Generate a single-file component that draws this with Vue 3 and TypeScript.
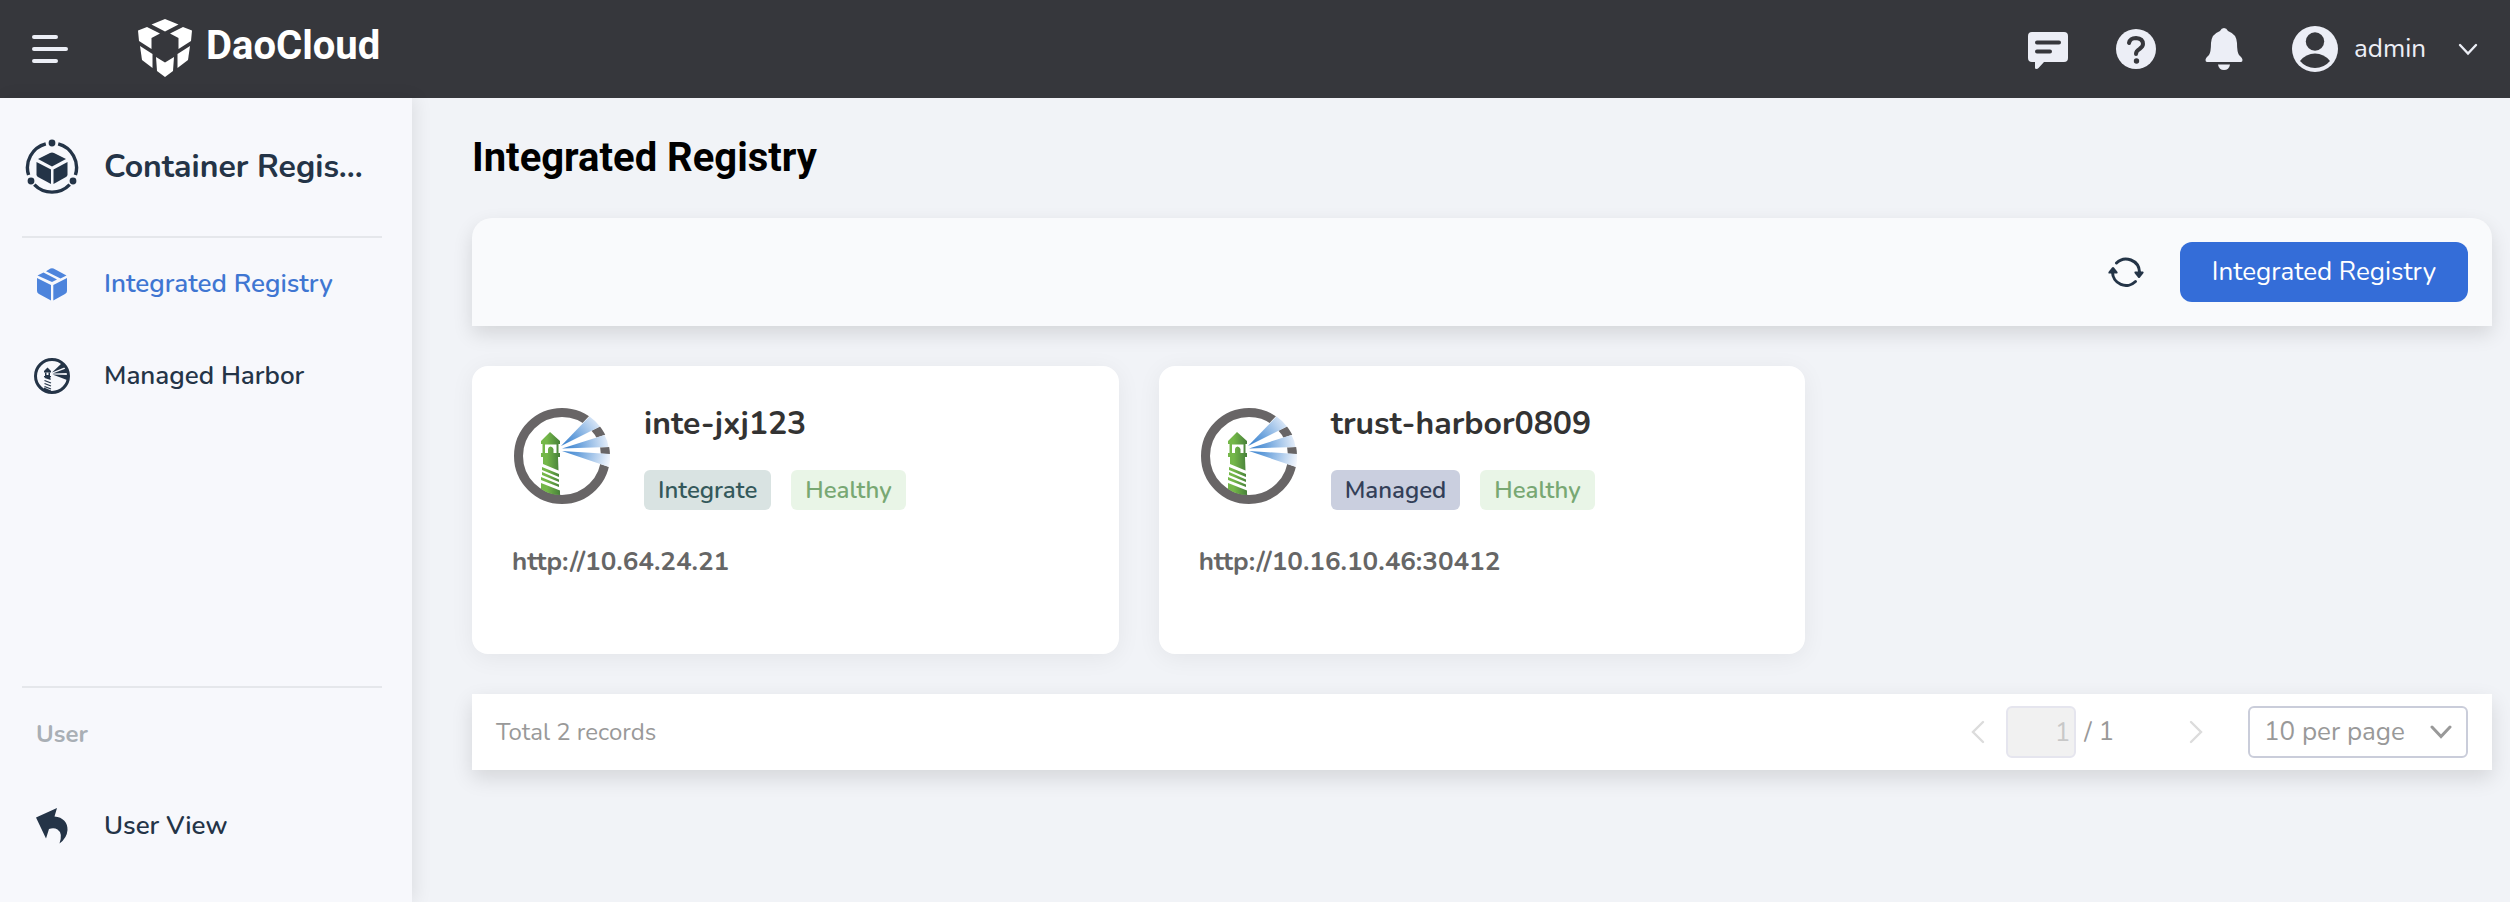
<script setup lang="ts">
import { ref } from 'vue'

interface Registry {
  name: string
  kind: 'Integrate' | 'Managed'
  status: string
  url: string
}

const registries: Registry[] = [
  { name: 'inte-jxj123', kind: 'Integrate', status: 'Healthy', url: 'http://10.64.24.21' },
  { name: 'trust-harbor0809', kind: 'Managed', status: 'Healthy', url: 'http://10.16.10.46:30412' },
]

const page = ref('1')
const pageSize = ref('10')
</script>

<template>
  <div class="app">
    <header class="topbar">
      <button class="icon-button menu" aria-label="Toggle menu">
        <svg width="36" height="28" viewBox="0 0 36 28">
          <path d="M2 2H24M2 14H34M2 26H24" stroke="#eceef6" stroke-width="4" stroke-linecap="round" />
        </svg>
      </button>
      <a class="brand" href="#">
        <svg width="54" height="58" viewBox="0 0 54 58" fill="#fff">
          <path d="M13.500 5.500 27 0 40.500 5.500 27 12.500z" />
          <path d="M0 11.500 9 8 22 14.500 13.500 19V30L1 22z" />
          <path d="M54 11.500 45 8 32 14.500 40.500 19V30L53 22z" />
          <path d="M2 27 14.500 35V49L4 41z" />
          <path d="M52 27 39.500 35V49L50 41z" />
          <path d="M18 38 27 43.500 36 38 35 52 27 58 19 52z" />
        </svg>
        <span class="brand-name">DaoCloud</span>
      </a>
      <div class="top-actions">
        <button class="icon-button" aria-label="Messages">
          <svg width="40" height="40" viewBox="0 0 40 40">
            <path d="M4 3H36a4 4 0 0 1 4 4V29a4 4 0 0 1-4 4H16L10.500 39Q9 40.500 7 39.500V33H4a4 4 0 0 1-4-4V7a4 4 0 0 1 4-4z" fill="#eceef6" />
            <path d="M9 13.500H31M9 22.500H22" stroke="#36373c" stroke-width="4" stroke-linecap="round" />
          </svg>
        </button>
        <button class="icon-button" aria-label="Help">
          <svg width="40" height="40" viewBox="0 0 40 40">
            <circle cx="20" cy="20" r="20" fill="#eceef6" />
            <path d="M13 14Q14 9 20 9Q27 9.500 27 15Q27 17.500 23.500 20Q20 22 20 25" fill="none" stroke="#36373c" stroke-width="4" stroke-linecap="round" />
            <circle cx="20.500" cy="32" r="2.700" fill="#36373c" />
          </svg>
        </button>
        <button class="icon-button" aria-label="Notifications">
          <svg width="40" height="44" viewBox="0 0 40 44" fill="#eceef6">
            <path d="M20 1Q22.500 1 24 4Q32.500 7 33 16Q33 25 35 28Q38.500 31 38.500 33Q38.500 35 37 35H3Q1.500 35 1.500 33Q1.500 31 5 28Q7 25 7 16Q7.500 7 16 4Q17.500 1 20 1z" />
            <path d="M14 37.500H26Q25 43 20 43Q15 43 14 37.500z" />
          </svg>
        </button>
        <button class="user-menu">
          <svg width="46" height="46" viewBox="0 0 46 46">
            <circle cx="23" cy="23" r="23" fill="#eceef6" />
            <circle cx="23" cy="15.500" r="9.200" fill="#36373c" />
            <path d="M8 35Q14 27.500 23 27.500Q32 27.500 38 35Q32 42 23 42Q14 42 8 35z" fill="#36373c" />
          </svg>
          <span class="user-name">admin</span>
          <svg width="20" height="14" viewBox="0 0 20 14">
            <path d="M2 3 10 11.500 18 3" fill="none" stroke="#eceef6" stroke-width="2.400" stroke-linecap="round" />
          </svg>
        </button>
      </div>
    </header>

    <div class="body">
      <aside class="sidebar">
        <div class="product">
          <span class="nav-icon">
            <svg width="56" height="56" viewBox="0 0 56 56" fill="#243447">
              <g fill="none" stroke="#243447" stroke-width="3.400">
                <path d="M34.200 4.800A24.600 24.600 0 0 1 51.400 36" />
                <path d="M45.700 45.600A24.600 24.600 0 0 1 10.300 45.600" />
                <path d="M4.600 36A24.600 24.600 0 0 1 21.800 4.800" />
              </g>
              <circle cx="28" cy="4" r="3.400" />
              <circle cx="7" cy="42" r="3.400" />
              <circle cx="49" cy="42" r="3.400" />
              <path d="M14 20 26 14Q28 13 30 14L42 20 28 27.500z" />
              <path d="M12.500 23 27 30.500V45L14 38Q12.500 37 12.500 35.500z" />
              <path d="M43.500 23 29.500 30.500V45L42 38Q43.500 37 43.500 35.500z" />
            </svg>
          </span>
          <span class="product-name">Container Regis...</span>
        </div>
        <nav class="nav">
          <a class="nav-item active" href="#">
            <span class="nav-icon">
              <svg width="32" height="34" viewBox="0 0 32 34" fill="#4d84dc">
                <path d="M1.500 8.500 7.500 5.500 21 12.500 16 15z" />
                <path d="M10 4.200 14.500 1.500Q16 .800 17.500 1.500L30.500 8.500 24.500 11.500z" />
                <path d="M1 11 15 18V33.500L3 27Q1 26 1 24z" />
                <path d="M31 11 17.300 18V33.500L29 27Q31 26 31 24z" />
              </svg>
            </span>
            <span>Integrated Registry</span>
          </a>
          <a class="nav-item" href="#">
            <span class="nav-icon">
              <svg width="36" height="36" viewBox="0 0 36 36" fill="#243447">
                <circle cx="18" cy="18" r="16.500" fill="none" stroke="#243447" stroke-width="3" />
                <path d="M18 14.500 28 5 31.500 9z" />
                <path d="M18.500 15.500 32 10.500 33.500 15z" />
                <path d="M18.500 16.500 34 17 33 22z" />
                <path d="M10 13 13.500 9.500 17 13V14.500H10z" />
                <path d="M11 14.500H12.500V17H14.500V14.500H16V18H17V19H16.300L16.700 22 10.500 20 10.700 19H10V18H11z" />
                <path d="M10.500 22.500 17 25M10.500 25.500 17 28M10.500 28.500 17 31" stroke="#243447" stroke-width="1.300" />
                <path d="M10 29.500 17 32.500V34L10 32z" />
              </svg>
            </span>
            <span>Managed Harbor</span>
          </a>
        </nav>
        <div class="side-bottom">
          <div class="group-label">User</div>
          <a class="nav-item" href="#">
            <span class="nav-icon">
              <svg width="32" height="36" viewBox="0 0 32 36" fill="#243447">
                <path d="M0 9.500 21 0 18.500 8.500C27 9 32 15 31.500 22Q31 30 23.500 35.500Q27 25 21.500 21.500Q18 19.500 13 21L10 30.500z" />
              </svg>
            </span>
            <span>User View</span>
          </a>
        </div>
      </aside>

      <main class="content">
        <h1 class="title">Integrated Registry</h1>
        <div class="toolbar">
          <button class="icon-button" aria-label="Refresh">
            <svg width="36" height="32" viewBox="0 0 36 32">
              <g fill="none" stroke="#243447" stroke-width="3" stroke-linecap="round">
                <path d="M8.500 7A13.500 13.500 0 0 1 31.500 16" />
                <path d="M27.500 25.500A13.500 13.500 0 0 1 4.500 16" />
              </g>
              <path d="M27 15.500H35Q36 16 35.500 17L32 21.500Q31 22.500 30 21.500L26.500 17Q26 15.500 27 15.500z" fill="#243447" />
              <path d="M1 17.500H9Q10 17 9.500 16L6 11.500Q5 10.500 4 11.500L.500 16Q0 17.500 1 17.500z" fill="#243447" />
            </svg>
          </button>
          <button class="primary">Integrated Registry</button>
        </div>

        <div class="cards">
          <article v-for="(item, i) in registries" :key="item.name" class="card">
            <div class="card-head">
              <svg class="harbor" width="96" height="96" viewBox="0 0 96 96">
                <defs>
                  <radialGradient :id="`beam${i}`" gradientUnits="userSpaceOnUse" cx="47" cy="40" r="51">
                    <stop offset="0" stop-color="#2f7bcb" />
                    <stop offset=".35" stop-color="#69a1dc" />
                    <stop offset="1" stop-color="#f4f7fd" />
                  </radialGradient>
                  <linearGradient :id="`tower${i}`" gradientUnits="userSpaceOnUse" x1="27" y1="0" x2="46" y2="0">
                    <stop offset=".3" stop-color="#74b749" />
                    <stop offset="1" stop-color="#47803a" />
                  </linearGradient>
                </defs>
                <circle cx="48" cy="48" r="43.500" fill="none" stroke="#686566" stroke-width="9" />
                <path d="M47 38 77 6 90 16.500z M47 41 92 26.500 98 39z M47 43 98 46.300 98 60z" fill="#fff" />
                <g :fill="`url(#beam${i})`">
                  <path d="M47 38 75.500 8.500Q82 13 86 18.500z" />
                  <path d="M48 40.500 90.500 27Q93.500 32 94.500 39z" />
                  <path d="M48 43 96 46Q96.500 52 95 59z" />
                </g>
                <g :fill="`url(#tower${i})`">
                  <path d="M36 24 46 33V36H44.500V45H46V49H44L44.500 62.500 29 56V49H27V45H28.500V36H27V33z" />
                  <path d="M28 59 45 66V69L28 62z" />
                  <path d="M28 64 45 71.500V74L28 67z" />
                  <path d="M27 69 45 76.500V79L27 72z" />
                  <path d="M27 75 46 82.500V87Q36 87 27 81z" />
                </g>
                <path d="M31 36.500H42.500V45H39.500V41Q38.500 38.500 36.500 38.500Q34.500 38.500 34 41V45H31z" fill="#fff" />
              </svg>
              <div class="card-info">
                <h2 class="card-name">{{ item.name }}</h2>
                <div class="tags">
                  <span class="tag" :class="item.kind.toLowerCase()">{{ item.kind }}</span>
                  <span class="tag healthy">{{ item.status }}</span>
                </div>
              </div>
            </div>
            <p class="url">{{ item.url }}</p>
          </article>
        </div>

        <footer class="pager">
          <span class="total">Total 2 records</span>
          <button class="icon-button" aria-label="Previous page" disabled>
            <svg width="16" height="24" viewBox="0 0 16 24">
              <path d="M13 2 3 12 13 22" fill="none" stroke="#dcdcdc" stroke-width="2.400" stroke-linecap="round" />
            </svg>
          </button>
          <input v-model="page" class="page-input" aria-label="Page number" disabled />
          <span class="page-count">/ 1</span>
          <button class="icon-button next" aria-label="Next page" disabled>
            <svg width="16" height="24" viewBox="0 0 16 24">
              <path d="M3 2 13 12 3 22" fill="none" stroke="#dcdcdc" stroke-width="2.400" stroke-linecap="round" />
            </svg>
          </button>
          <div class="size-picker">
            <select v-model="pageSize" aria-label="Records per page">
              <option value="10">10 per page</option>
              <option value="20">20 per page</option>
              <option value="50">50 per page</option>
            </select>
            <svg class="caret" width="22" height="14" viewBox="0 0 22 14">
              <path d="M2 2 11 11.500 20 2" fill="none" stroke="#999" stroke-width="3" stroke-linecap="round" />
            </svg>
          </div>
        </footer>
      </main>
    </div>
  </div>
</template>

<style>
body {
  margin: 0;
}
</style>

<style scoped>
.app {
  display: flex;
  flex-direction: column;
  min-height: 100vh;
  background: #f1f3f7;
  color: #243447;
  font-family: Nunito, "Open Sans", "Noto Sans", sans-serif;
  font-size: 26px;
  line-height: 36px;
}
.app *,
.app *::before {
  box-sizing: border-box;
}
button,
input,
select {
  font: inherit;
  color: inherit;
}
svg {
  display: block;
  flex: none;
}
a {
  color: inherit;
  text-decoration: none;
}
.icon-button {
  display: flex;
  padding: 0;
  border: 0;
  background: none;
}
.topbar {
  display: flex;
  align-items: center;
  height: 98px;
  padding: 0 32px;
  background: #36373c;
}
.brand {
  display: flex;
  align-items: flex-start;
  gap: 14px;
  margin-left: 70px;
  padding-bottom: 2px;
}
.brand-name {
  color: #fff;
  font: 700 40px/54px Roboto, sans-serif;
}
.top-actions {
  display: flex;
  align-items: center;
  gap: 48px;
  margin-left: auto;
}
.user-menu {
  display: flex;
  align-items: center;
  padding: 0;
  border: 0;
  background: none;
  color: #eceef6;
}
.user-name {
  margin: 0 32px 0 16px;
}
.body {
  display: flex;
  flex: 1;
}
.sidebar {
  display: flex;
  flex-direction: column;
  flex: none;
  width: 412px;
  padding: 0 30px 30px 22px;
  background: #f7f8fc;
  box-shadow: 4px 0 16px rgba(0, 0, 0, 0.08);
}
.product,
.nav-item {
  display: flex;
  align-items: center;
  gap: 22px;
}
.product {
  height: 140px;
  border-bottom: 2px solid #e5e7eb;
  font-size: 32px;
  font-weight: 700;
}
.product-name {
  line-height: 44px;
  white-space: nowrap;
}
.nav-icon {
  display: flex;
  flex: none;
  justify-content: center;
  width: 60px;
}
.nav-item {
  height: 92px;
  font-weight: 600;
}
.active {
  color: #3f76d2;
}
.side-bottom {
  margin-top: auto;
  border-top: 2px solid #e5e7eb;
}
.group-label {
  padding: 0 14px;
  color: #a9afb5;
  font-size: 24px;
  font-weight: 700;
  line-height: 92px;
}
.content {
  flex: 1;
  min-width: 0;
  padding: 32px 18px 32px 60px;
}
.title {
  margin: 0 0 32px;
  color: #000;
  font: 700 40px/56px Roboto, sans-serif;
}
.toolbar {
  display: flex;
  align-items: center;
  justify-content: flex-end;
  gap: 36px;
  padding: 24px;
  border-radius: 20px 20px 0 0;
  background: #f9fafc;
  box-shadow: 0 8px 20px rgba(0, 0, 0, 0.12);
}
.primary {
  height: 60px;
  padding: 0 32px;
  border: 0;
  border-radius: 12px;
  background: #346dd8;
  color: #fff;
}
.cards {
  display: grid;
  grid-template-columns: repeat(3, 1fr);
  gap: 40px;
  margin: 40px 0;
}
.card {
  min-height: 288px;
  padding: 36px 40px;
  border-radius: 16px;
  background: #fff;
  box-shadow: 0 4px 24px rgba(0, 0, 0, 0.06);
}
.card-head {
  display: flex;
  gap: 34px;
}
.harbor {
  margin: 6px 0 0 2px;
}
.card-name {
  margin: 0 0 24px;
  color: #333;
  font-size: 32px;
  font-weight: 700;
  line-height: 44px;
}
.tags {
  display: flex;
  gap: 20px;
}
.tag {
  padding: 0 14px;
  border-radius: 6px;
  font-size: 24px;
  font-weight: 600;
  line-height: 40px;
}
.integrate {
  background: #d9e3e2;
  color: #34595b;
}
.managed {
  background: #cacfdf;
  color: #333f58;
}
.healthy {
  background: #e9f5e7;
  color: #78a873;
}
.url {
  margin: 34px 0 0;
  color: #666;
  font-weight: 700;
}
.pager {
  display: flex;
  align-items: center;
  height: 76px;
  padding: 0 24px;
  background: #fff;
  color: #999;
  box-shadow: 0 8px 20px rgba(0, 0, 0, 0.12);
}
.total {
  margin-right: auto;
  font-size: 24px;
}
.page-input {
  width: 70px;
  height: 52px;
  margin: 0 8px 0 20px;
  padding: 0 4px;
  border: 2px solid #e5e5ee;
  border-radius: 6px;
  background: #f1f1f1;
  color: #c8c8c8;
  text-align: right;
}
.next {
  margin: 0 44px 0 74px;
}
.size-picker {
  position: relative;
}
.size-picker select {
  width: 220px;
  height: 52px;
  padding: 0 14px;
  border: 2px solid #cacdda;
  border-radius: 6px;
  background: #fff;
  appearance: none;
}
.caret {
  position: absolute;
  top: 19px;
  right: 16px;
  pointer-events: none;
}
</style>
